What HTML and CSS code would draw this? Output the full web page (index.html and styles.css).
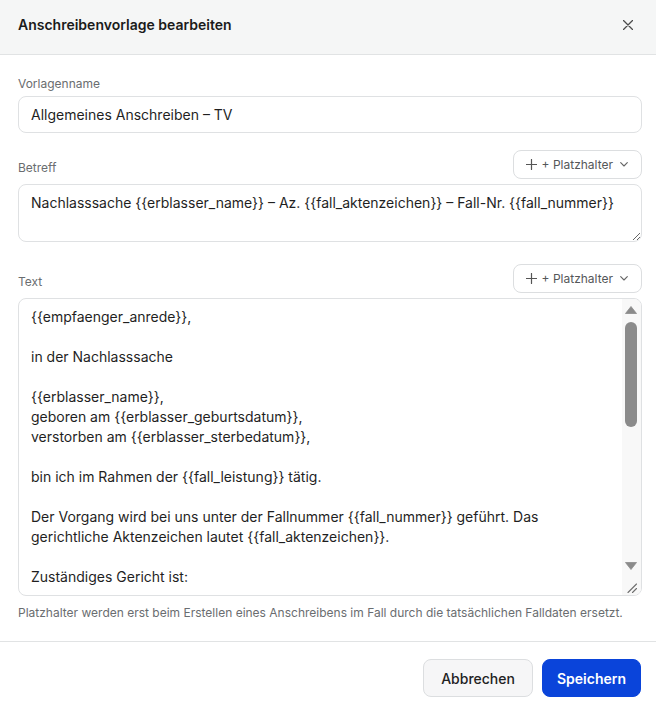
FILE: index.html
```html
<!DOCTYPE html>
<html lang="de">
<head>
<meta charset="utf-8">
<title>Anschreibenvorlage bearbeiten</title>
<link rel="stylesheet" href="styles.css">
</head>
<body>
<div class="dialog">
  <div class="dialog-header">
    <h2 class="dialog-title">Anschreibenvorlage bearbeiten</h2>
    <button class="close-btn" type="button" aria-label="Schließen">
      <svg width="10" height="10" viewBox="0 0 10 10"><path d="M0.5 0.5 L9.5 9.5 M9.5 0.5 L0.5 9.5" stroke="#4b4b4b" stroke-width="1.3" fill="none" stroke-linecap="round"/></svg>
    </button>
  </div>
  <div class="dialog-body">
    <div class="field field-first">
      <label class="field-label">Vorlagenname</label>
      <input class="text-input" type="text" value="Allgemeines Anschreiben – TV">
    </div>
    <div class="field field-betreff">
      <div class="field-row">
        <label class="field-label row-label">Betreff</label>
        <button class="ph-btn" type="button">
          <svg class="ph-plus" width="11" height="11" viewBox="0 0 11 11"><path d="M5.5 0.5 V10.5 M0.5 5.5 H10.5" stroke="#555" stroke-width="1.2" fill="none" stroke-linecap="round"/></svg>
          <span>+ Platzhalter</span>
          <svg class="ph-chev" width="8" height="5" viewBox="0 0 8 5"><path d="M0.7 0.7 L4 4 L7.3 0.7" stroke="#666" stroke-width="1.1" fill="none" stroke-linecap="round" stroke-linejoin="round"/></svg>
        </button>
      </div>
      <textarea class="text-area betreff-area" rows="2">Nachlasssache {{erblasser_name}} – Az. {{fall_aktenzeichen}} – Fall-Nr. {{fall_nummer}}</textarea>
    </div>
    <div class="field field-text">
      <div class="field-row">
        <label class="field-label row-label">Text</label>
        <button class="ph-btn" type="button">
          <svg class="ph-plus" width="11" height="11" viewBox="0 0 11 11"><path d="M5.5 0.5 V10.5 M0.5 5.5 H10.5" stroke="#555" stroke-width="1.2" fill="none" stroke-linecap="round"/></svg>
          <span>+ Platzhalter</span>
          <svg class="ph-chev" width="8" height="5" viewBox="0 0 8 5"><path d="M0.7 0.7 L4 4 L7.3 0.7" stroke="#666" stroke-width="1.1" fill="none" stroke-linecap="round" stroke-linejoin="round"/></svg>
        </button>
      </div>
      <div class="editor">
        <textarea class="editor-input" rows="14">{{empfaenger_anrede}},

in der Nachlasssache

{{erblasser_name}},
geboren am {{erblasser_geburtsdatum}},
verstorben am {{erblasser_sterbedatum}},

bin ich im Rahmen der {{fall_leistung}} tätig.

Der Vorgang wird bei uns unter der Fallnummer {{fall_nummer}} geführt. Das gerichtliche Aktenzeichen lautet {{fall_aktenzeichen}}.

Zuständiges Gericht ist:

{{gericht_name}}
{{gericht_adresse}}

Ich bitte Sie, mir mitzuteilen, ob Ihnen Angaben zum Nachlass, insbesondere zu Vermögenswerten, Konten oder Verbindlichkeiten, vorliegen.

Für Rückfragen stehe ich Ihnen gerne zur Verfügung. Bitte geben Sie bei Ihrer Antwort stets die Fallnummer {{fall_nummer}} an.

Vielen Dank für Ihre Unterstützung.

Mit freundlichen Grüßen

{{bearbeiter_name}}
{{bearbeiter_funktion}}
{{kanzlei_name}}</textarea>
        <div class="vscroll" aria-hidden="true">
          <div class="vs-btn vs-up">
            <svg width="12" height="8" viewBox="0 0 12 8"><polygon points="0.5,7.5 6,0.5 11.5,7.5" fill="#8b8b8b" stroke="#8b8b8b" stroke-width="0.8" stroke-linejoin="round"/></svg>
          </div>
          <div class="vs-track"><div class="vs-thumb"></div></div>
          <div class="vs-btn vs-down">
            <svg width="12" height="8" viewBox="0 0 12 8"><polygon points="0.5,0.5 11.5,0.5 6,7.5" fill="#8b8b8b" stroke="#8b8b8b" stroke-width="0.8" stroke-linejoin="round"/></svg>
          </div>
          <div class="vs-corner">
            <svg width="10" height="10" viewBox="0 0 10 10"><path d="M9.5 1 L1 9.5 M9.5 5.5 L5.5 9.5" stroke="#6f6f6f" stroke-width="1.1" fill="none" stroke-linecap="round"/></svg>
          </div>
        </div>
      </div>
      <p class="help-text">Platzhalter werden erst beim Erstellen eines Anschreibens im Fall durch die tatsächlichen Falldaten ersetzt.</p>
    </div>
  </div>
  <div class="dialog-footer">
    <button class="btn btn-secondary" type="button">Abbrechen</button>
    <button class="btn btn-primary" type="button">Speichern</button>
  </div>
</div>
</body>
</html>
```

FILE: styles.css
```css
html, body {
  margin: 0;
  padding: 0;
  overflow: hidden;
  background: #ffffff;
}

body {
  font-family: Inter, "Noto Sans", "Liberation Sans", sans-serif;
  color: #1d1d1f;
}

.dialog {
  width: 656px;
  background: #ffffff;
}

.dialog-header {
  display: flex;
  align-items: center;
  justify-content: space-between;
  padding: 15px 18px 19px 18px;
  background: #f5f6f6;
  border-bottom: 1px solid #e1e3e4;
}

.dialog-title {
  margin: 0;
  font-size: 14px;
  line-height: 20px;
  font-weight: 600;
  color: #1b1b1b;
}

.close-btn {
  display: flex;
  align-items: center;
  justify-content: center;
  width: 20px;
  height: 20px;
  padding: 0;
  border: none;
  background: transparent;
}

.dialog-body {
  padding: 21px 14px 20px 18px;
}

.field-label {
  display: block;
  font-size: 12px;
  line-height: 16px;
  color: #6a6d70;
  margin-bottom: 4px;
}

.field-betreff {
  margin-top: 17px;
}

.field-text {
  margin-top: 22px;
}

.field-row {
  display: flex;
  align-items: flex-end;
  justify-content: space-between;
  margin-bottom: 5px;
}

.row-label {
  margin-bottom: 3px;
}

.text-input,
.text-area,
.editor-input {
  font-family: Inter, "Noto Sans", "Liberation Sans", sans-serif;
  font-size: 14px;
  line-height: 20px;
  color: #1f1f1f;
  outline: none;
  margin: 0;
}

.text-input,
.text-area {
  display: block;
  width: 100%;
  box-sizing: border-box;
  border: 1px solid #dfe1e3;
  border-radius: 8px;
  background: #ffffff;
  padding: 8px 12px;
}

.text-input {
  height: 37px;
}

.text-area {
  resize: vertical;
}

.betreff-area {
  height: 58px;
}

.editor {
  display: flex;
  height: 298px;
  box-sizing: border-box;
  border: 1px solid #dfe1e3;
  border-radius: 8px;
  overflow: hidden;
  background: #ffffff;
}

.editor-input {
  flex: 1;
  min-width: 0;
  box-sizing: border-box;
  border: none;
  padding: 8px 12px;
  background: transparent;
  resize: none;
  overflow: hidden;
}

.vscroll {
  width: 19px;
  flex: none;
  display: flex;
  flex-direction: column;
  background: #f8f8f8;
}

.vs-btn,
.vs-corner {
  height: 19px;
  flex: none;
  display: flex;
  justify-content: center;
  align-items: flex-start;
  box-sizing: border-box;
}

.vs-up {
  padding-top: 7px;
}

.vs-down {
  padding-top: 5px;
}

.vs-up svg,
.vs-down svg {
  margin-left: -1px;
}

.vs-corner {
  padding-top: 7px;
}

.vs-track {
  flex: 1;
  padding-top: 4px;
}

.vs-thumb {
  width: 12px;
  height: 105px;
  margin-left: 3px;
  border-radius: 6px;
  background: #8b8b8b;
}

.ph-btn {
  display: flex;
  align-items: center;
  height: 29px;
  box-sizing: border-box;
  padding: 0 13px 0 12px;
  border: 1px solid #dcdee0;
  border-radius: 8px;
  background: #ffffff;
  font-family: Inter, "Noto Sans", "Liberation Sans", sans-serif;
  font-size: 12px;
  color: #555759;
}

.ph-plus {
  margin-right: 5px;
}

.ph-chev {
  margin-left: 7px;
}

.help-text {
  margin: 9px 0 0 0;
  font-size: 12px;
  line-height: 16px;
  color: #6a6d70;
}

.dialog-footer {
  display: flex;
  justify-content: flex-end;
  gap: 9px;
  padding: 17px 15px 8px 18px;
  border-top: 1px solid #e1e3e4;
}

.btn {
  height: 38px;
  box-sizing: border-box;
  border-radius: 8px;
  font-family: Inter, "Noto Sans", "Liberation Sans", sans-serif;
  font-size: 14px;
  font-weight: 500;
}

.btn-secondary {
  padding: 0 17px;
  background: #f6f6f7;
  border: 1px solid #dcdee0;
  color: #222222;
}

.btn-primary {
  padding: 0 14px;
  background: #0a44da;
  border: 1px solid #0a44da;
  color: #ffffff;
  font-weight: 600;
}
```
